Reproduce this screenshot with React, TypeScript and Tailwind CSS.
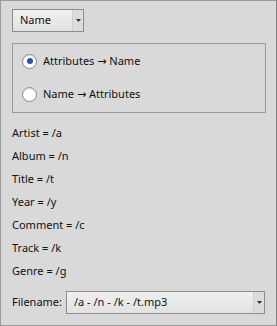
import { useState } from 'react';

const tags = [
  ['Artist', '/a'],
  ['Album', '/n'],
  ['Title', '/t'],
  ['Year', '/y'],
  ['Comment', '/c'],
  ['Track', '/k'],
  ['Genre', '/g'],
];

function Arrow() {
  return (
    <svg width="5" height="3" viewBox="0 0 5 3">
      <path d="M0 0 H5 L2.5 3 Z" fill="#2a2f4a" />
    </svg>
  );
}

function Combo({ value, className }: { value: string; className: string }) {
  return (
    <div
      className={`flex h-[23px] items-stretch border border-[#8c8c8c] bg-gradient-to-b from-[#f0f0f0] to-[#e2e2e2] ${className}`}
    >
      <span className="flex flex-1 items-center pl-[7px] text-[11px] text-[#111]">{value}</span>
      <span className="flex w-[11px] items-center justify-center border-l border-[#cfcfcf] bg-[#dcdcdc]">
        <Arrow />
      </span>
    </div>
  );
}

function Radio({ checked, from, to, onClick }: { checked: boolean; from: string; to: string; onClick: () => void }) {
  return (
    <button type="button" onClick={onClick} className="flex items-center gap-[6px] text-left">
      <span className="flex h-[15px] w-[15px] items-center justify-center rounded-full border border-[#8a8a8a] bg-white shadow-[inset_0_1px_1px_rgba(0,0,0,0.15)]">
        {checked && <span className="h-[6px] w-[6px] rounded-full bg-[#2456a8]" />}
      </span>
      <span className="text-[11px] text-[#111]">
        {from} <span style={{ fontFamily: '"DejaVu Sans", sans-serif' }}>→</span> {to}
      </span>
    </button>
  );
}

export default function App() {
  const [dir, setDir] = useState<'a2n' | 'n2a'>('a2n');

  return (
    <div
      className="h-[326px] w-[277px] border border-[#9a9a9a] border-r-[#808080] bg-[#d9d9d9] px-[11px] pt-[8px]"
      style={{ fontFamily: '"Noto Sans", "Open Sans", sans-serif' }}
    >
      <Combo value="Name" className="w-[72px]" />

      <div className="mt-[11px] flex h-[70px] w-[254px] flex-col justify-center gap-[16px] border border-[#9a9a9a] pl-[9px]">
        <Radio checked={dir === 'a2n'} from="Attributes" to="Name" onClick={() => setDir('a2n')} />
        <Radio checked={dir === 'n2a'} from="Name" to="Attributes" onClick={() => setDir('n2a')} />
      </div>

      <ul className="mt-[9px] flex flex-col">
        {tags.map(([k, v]) => (
          <li key={k} className="flex h-[23px] items-center text-[11px] text-[#111]">
            {k} = {v}
          </li>
        ))}
      </ul>

      <div className="mt-[8px] flex items-center gap-[4px]">
        <span className="text-[11px] text-[#111]">Filename:</span>
        <Combo value="/a - /n - /k - /t.mp3" className="w-[199px]" />
      </div>
    </div>
  );
}
